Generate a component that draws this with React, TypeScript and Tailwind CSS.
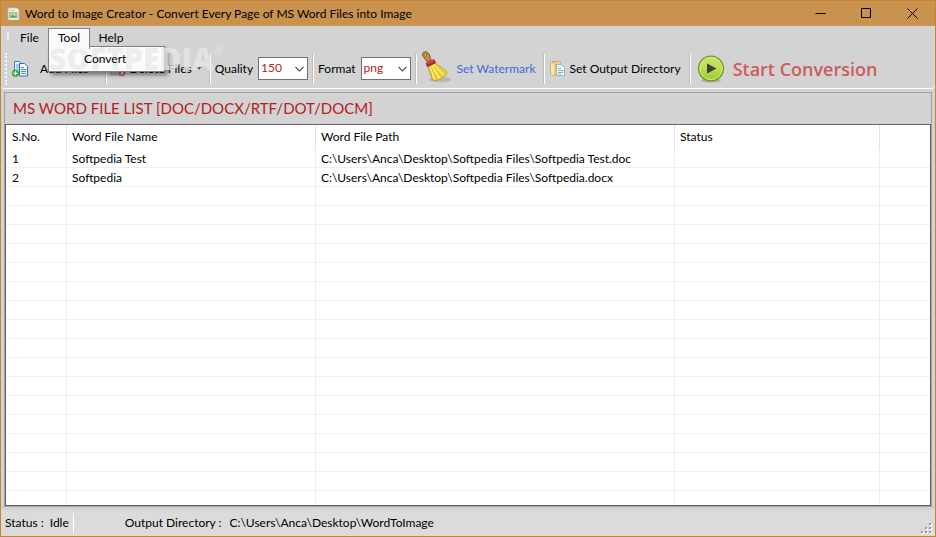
import { useState } from "react";
import type { ReactNode } from "react";

interface WordFile {
  name: string;
  path: string;
}

const FILES: WordFile[] = [
  { name: "Softpedia Test", path: "C:\\Users\\Anca\\Desktop\\Softpedia Files\\Softpedia Test.doc" },
  { name: "Softpedia", path: "C:\\Users\\Anca\\Desktop\\Softpedia Files\\Softpedia.docx" },
];

const COLUMNS = ["S.No.", "Word File Name", "Word File Path", "Status", ""];
const BLANK_ROWS = 40;

function AppIcon() {
  return (
    <svg className="h-4 w-4 shrink-0" viewBox="0 0 16 16" aria-hidden="true">
      <path d="M3 2h9l2 2v10H3z" fill="#f4f4ee" stroke="#b3b3a6" strokeWidth=".8" />
      <path d="M4.500 4.500h6" stroke="#c6cec2" />
      <rect x="4.500" y="6.500" width="7.500" height="5" fill="#b5d79c" stroke="#8db573" strokeWidth=".8" />
      <path d="m5 11.500 2.500-3 2 2 1.200-1.200L12 11.500z" fill="#6fa455" />
    </svg>
  );
}

function AddFilesIcon() {
  return (
    <svg className="h-4 w-4 shrink-0" viewBox="0 0 16 16" aria-hidden="true">
      <path d="M2.500.5h5l2 2V12h-7z" fill="#e5f1fc" stroke="#3f7fc8" />
      <path d="M4 4h3M4 6h3M4 8h3" stroke="#6fa6e0" />
      <path d="M7.500 2.500h5l3 3v9.500h-8z" fill="#f3f9ff" stroke="#2f6fc0" />
      <path d="M9 6.500h3M9 8.500h5M9 10.500h5M9 12.500h5" stroke="#4a8bd8" />
      <circle cx="3.500" cy="12.300" r="3.300" fill="#42b52f" stroke="#238618" strokeWidth=".6" />
      <path d="M3.500 10.300v4M1.500 12.300h4" stroke="#fff" strokeWidth="1.200" />
    </svg>
  );
}

function DeleteFilesIcon() {
  return (
    <svg className="h-4 w-4 shrink-0" viewBox="0 0 16 16" aria-hidden="true">
      <path d="M2.500 1.500h7l3 3v9h-10z" fill="#eef1f5" stroke="#85909c" />
      <path d="M1 9h11l2 5H1z" fill="#b5bac1" stroke="#8b9098" strokeWidth=".7" />
      <circle cx="12" cy="12" r="3.200" fill="#d45b55" />
      <path d="m10.700 10.700 2.600 2.600m0-2.600-2.600 2.600" stroke="#fff" />
    </svg>
  );
}

function BroomIcon() {
  return (
    <svg className="mb-1 h-8 w-8 shrink-0" viewBox="0 0 32 32" aria-hidden="true">
      <ellipse cx="19" cy="28.500" rx="11" ry="2.800" fill="#777" opacity=".3" />
      <path d="M1.500 4C.8 1.500 3.500.2 6 1c2.200.8 2.800 4 4.200 8l-4.200 2C4.500 8 2.200 6.500 1.500 4z" fill="#c58a3c" stroke="#7d4c16" strokeWidth=".8" />
      <circle cx="4.300" cy="3.900" r="1.300" fill="#d6d3cb" stroke="#7d4c16" strokeWidth=".7" />
      <path d="M6.500 15.500 14 11.800c4 3 8.500 5.600 12.500 10-3 4.500-8.500 8-14.500 7.700C9.500 25 9 21 6.500 15.500z" fill="#eed038" stroke="#b8921b" strokeWidth=".7" />
      <path d="m9 16 4.500 12M11 15l7.500 12M13 14l10 10" stroke="#fff27d" strokeWidth="1.500" fill="none" />
      <path d="m8 17 3.500 11M10.500 17l5.500 11M12.500 16l8.500 10M14 14.500l10.500 8.500" stroke="#c9a01b" strokeWidth=".5" fill="none" />
      <path d="m5 12.500 8-4 1.600 3.200-8.200 4z" fill="#c71f25" stroke="#831014" strokeWidth=".6" />
      <path d="m6.500 13 7-3.400" stroke="#f17575" strokeWidth=".7" />
    </svg>
  );
}

function FolderIcon() {
  return (
    <svg className="h-4 w-4 shrink-0" viewBox="0 0 16 16" aria-hidden="true">
      <path d="M3 .5h8.500v13H3z" fill="#edcf87" stroke="#c9a65a" strokeWidth=".8" />
      <path d="M1.500.8 6 2.200v13l-4.500-1.800z" fill="#fbe7ab" stroke="#c9a855" strokeWidth=".8" />
      <path d="M7.500 3.500h5l3 3v8h-8z" fill="#f1f7fa" stroke="#8fa7b2" strokeWidth=".8" />
      <path d="M9 7.500h3M9 9.500h5M9 11.500h5M9 13h3" stroke="#8cb0c5" />
    </svg>
  );
}

function PlayIcon() {
  return (
    <svg className="h-7 w-7 shrink-0" viewBox="0 0 28 28" aria-hidden="true">
      <defs>
        <linearGradient id="play-face" x1="0" y1="0" x2="0" y2="1">
          <stop offset="0" stopColor="#cce56b" />
          <stop offset=".5" stopColor="#bddc50" />
          <stop offset="1" stopColor="#9fc832" />
        </linearGradient>
      </defs>
      <ellipse cx="14" cy="25.500" rx="10" ry="2" fill="#777" opacity=".4" />
      <circle cx="14" cy="13.500" r="12.400" fill="url(#play-face)" stroke="#65991f" strokeWidth="1.300" />
      <circle cx="14" cy="13.500" r="11.200" fill="none" stroke="#e0f08f" strokeWidth=".8" />
      <path d="M10 8.500 19.500 13.500 10 18.500z" fill="#3d4138" />
    </svg>
  );
}

function WindowButton({ label, children }: { label: string; children: ReactNode }) {
  return (
    <button aria-label={label} className="flex h-6 w-[46px] items-center justify-center">
      <svg className="h-[11px] w-[11px]" viewBox="0 0 11 11" fill="none" stroke="#000" aria-hidden="true">
        {children}
      </svg>
    </button>
  );
}

function Divider() {
  return <span className="h-[30px] w-[2px] shrink-0 border-l border-[#bdbdbd] bg-white" />;
}

interface PickerProps {
  id: string;
  label: string;
  options: string[];
}

function Picker({ id, label, options }: PickerProps) {
  const [value, setValue] = useState(options[0]);
  return (
    <div className="flex items-center gap-[5px]">
      <label htmlFor={id}>{label}</label>
      <span className="relative flex">
        <select
          id={id}
          value={value}
          onChange={(e) => setValue(e.target.value)}
          className="h-[23px] w-[50px] appearance-none border border-[#707070] bg-white pb-px pl-[2px] text-[12px] leading-5 text-[#b22222]"
        >
          {options.map((o) => (
            <option key={o}>{o}</option>
          ))}
        </select>
        <svg
          className="pointer-events-none absolute right-1 top-2 h-2 w-[9px]"
          viewBox="0 0 9 8"
          fill="none"
          stroke="#555"
          strokeWidth="1.200"
          aria-hidden="true"
        >
          <path d="m.5 2 4 4 4-4" />
        </svg>
      </span>
    </div>
  );
}

function TitleBar() {
  return (
    <header className="flex h-[25px] shrink-0 items-center bg-[#c9924f] pl-1">
      <AppIcon />
      <h1 className="ml-1 flex-1 truncate">Word to Image Creator - Convert Every Page of MS Word Files into Image</h1>
      <WindowButton label="Minimize">
        <path d="M.5 5.500h10" />
      </WindowButton>
      <WindowButton label="Maximize">
        <path d="M.5.5h9v9h-9z" />
      </WindowButton>
      <WindowButton label="Close">
        <path d="m.5.5 10 10m0-10-10 10" />
      </WindowButton>
    </header>
  );
}

// Sits on the menu panel and runs out over the toolbar behind it.
function Watermark() {
  return (
    <span
      aria-hidden="true"
      className="pointer-events-none absolute left-0 top-[-2px] flex font-['Open_Sans',sans-serif] text-[30px] font-extrabold leading-[28px] text-[#e8e8e8]/75"
    >
      SOFTPEDIA
      <span className="text-[12px] font-normal leading-3">®</span>
    </span>
  );
}

function MenuBar() {
  return (
    <nav className="flex h-[23px] shrink-0 items-stretch pl-[6px] pt-[2px]">
      <span className="mt-1 h-2 border-l-2 border-dotted border-[#f5f5f5]" />
      <button className="w-[39px] pb-[2px] pl-[2px]">File</button>
      <div className="relative z-20 flex">
        <button className="relative z-10 w-[42px] border border-b-0 border-[#808080] bg-[#fafafa] pb-[2px]">Tool</button>
        <div className="absolute left-0 top-[18px] w-[117px] border border-[#808080] bg-[#fcfcfc] shadow-[3px_3px_4px_rgba(0,0,0,0.45)]">
          <Watermark />
          <button className="relative h-[24px] w-full pl-[35px] text-left">Convert</button>
        </div>
      </div>
      <button className="w-[42px] pb-[2px]">Help</button>
    </nav>
  );
}

function Toolbar() {
  return (
    <div className="flex h-10 shrink-0 items-center rounded-b-sm border-b border-white pl-1">
      <span className="h-8 border-l-2 border-dotted border-[#f5f5f5]" />
      <button className="ml-[5px] flex items-center gap-3">
        <AddFilesIcon />
        Add Files
      </button>
      <div className="ml-4 flex items-center gap-[3px]">
        <Divider />
        <button className="flex items-center gap-1">
          <DeleteFilesIcon />
          Delete Files
          <svg className="h-[3px] w-[5px]" viewBox="0 0 5 3" aria-hidden="true">
            <path d="M0 0h5L2.500 3z" />
          </svg>
        </button>
      </div>
      <div className="ml-2 flex items-center gap-1">
        <Divider />
        <Picker id="quality" label="Quality" options={["150", "200", "300"]} />
        <Divider />
        <Picker id="format" label="Format" options={["png", "jpg", "bmp"]} />
        <Divider />
      </div>
      <button className="ml-1 flex items-center gap-1 text-[#4169e1]">
        <BroomIcon />
        Set Watermark
      </button>
      <div className="ml-2 flex items-center gap-1">
        <Divider />
        <button className="flex items-center gap-1">
          <FolderIcon />
          Set Output Directory
        </button>
      </div>
      <div className="ml-2 flex items-center gap-[6px]">
        <Divider />
        <button className="flex items-center gap-2 font-['Open_Sans',sans-serif] text-[18px] font-semibold text-[#cd5c5c]">
          <PlayIcon />
          Start Conversion
        </button>
      </div>
    </div>
  );
}

function FileTable() {
  return (
    <div className="min-h-0 flex-1 overflow-hidden border border-[#646464] bg-white">
      <table className="w-full table-fixed border-separate border-spacing-0 text-left">
        <colgroup>
          <col className="w-[61px]" />
          <col className="w-[249px]" />
          <col className="w-[359px]" />
          <col className="w-[205px]" />
          <col />
        </colgroup>
        <thead>
          <tr className="h-6">
            {COLUMNS.map((c) => (
              <th key={c} scope="col" className="border-r border-[#e2e2e2] pl-[5px] font-normal first:pl-[6px] last:border-0">
                {c}
              </th>
            ))}
          </tr>
        </thead>
        <tbody>
          {FILES.map((file, i) => (
            <tr key={file.path} className="h-[19px]">
              {[String(i + 1), file.name, file.path, "", ""].map((text, n) => (
                <td
                  key={n}
                  className="border-b border-r border-[#eeeeee] pl-[5px] pt-[2px] leading-4 first:pl-[6px] last:border-r-0"
                >
                  {text}
                </td>
              ))}
            </tr>
          ))}
          {Array.from({ length: BLANK_ROWS }, (_, i) => (
            <tr key={i} className="h-[19px]">
              {COLUMNS.map((c) => (
                <td key={c} className="border-b border-r border-[#eeeeee] last:border-r-0" />
              ))}
            </tr>
          ))}
        </tbody>
      </table>
    </div>
  );
}

function StatusBar() {
  return (
    <footer className="flex h-[26px] shrink-0 items-center bg-[#dbdbdb] pl-1">
      <span>Status :</span>
      <span className="ml-[6px]">Idle</span>
      <span className="ml-1 h-5 w-px bg-white" />
      <span className="ml-[51px]">Output Directory :</span>
      <span className="ml-2">C:\Users\Anca\Desktop\WordToImage</span>
      <svg className="mb-[2px] ml-auto mr-[2px] h-3 w-3 self-end" viewBox="0 0 12 12" fill="#9c9c9c" aria-hidden="true">
        <path d="M9 2h2v2H9zM5 6h2v2H5zM9 6h2v2H9zM1 10h2v2H1zM5 10h2v2H5zM9 10h2v2H9z" fill="#fff" />
        <path d="M8 1h2v2H8zM4 5h2v2H4zM8 5h2v2H8zM0 9h2v2H0zM4 9h2v2H4zM8 9h2v2H8z" />
      </svg>
    </footer>
  );
}

export default function App() {
  return (
    <div className="flex h-screen flex-col overflow-hidden border border-[#c8842d] bg-[#d3d3d3] font-['Lato','Open_Sans',sans-serif] text-[12px] leading-[18px] text-black">
      <TitleBar />
      <MenuBar />
      <Toolbar />
      <main className="mx-[3px] mb-[3px] mt-[3px] flex min-h-0 flex-1 flex-col border border-[#a0a0a0]">
        <h2 className="h-[31px] shrink-0 pl-2 text-[15px] leading-[31px] text-[#b22222]">
          MS WORD FILE LIST [DOC/DOCX/RTF/DOT/DOCM]
        </h2>
        <FileTable />
      </main>
      <StatusBar />
    </div>
  );
}
